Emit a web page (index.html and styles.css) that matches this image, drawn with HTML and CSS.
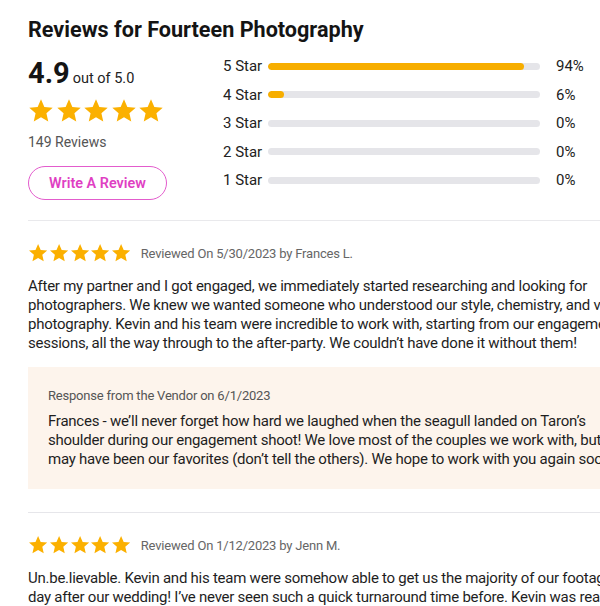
FILE: index.html
```html
<!DOCTYPE html>
<html>
<head>
<meta charset="utf-8">
<link rel="stylesheet" href="styles.css">
</head>
<body>
<svg width="0" height="0" class="defs">
  <defs>
    <symbol id="star" viewBox="0 0 24 24"><path d="M12 1.2l3.1 7.1 7.7.7-5.8 5.1 1.7 7.6L12 17.7l-6.7 4 1.7-7.6-5.8-5.1 7.7-.7z"/></symbol>
  </defs>
</svg>
<main class="page">
  <h1 class="title">Reviews for Fourteen Photography</h1>

  <section class="summary">
    <div class="overall">
      <div class="score"><span class="score-num">4.9</span><span class="score-of">out of 5.0</span></div>
      <div class="stars stars-lg">
        <svg><use href="#star"/></svg><svg><use href="#star"/></svg><svg><use href="#star"/></svg><svg><use href="#star"/></svg><svg><use href="#star"/></svg>
      </div>
      <div class="count">149 Reviews</div>
      <button class="write-btn">Write A Review</button>
    </div>
    <div class="dist">
      <div class="dist-row"><span class="dist-label">5 Star</span><span class="bar"><span class="bar-fill" style="width:94%"></span></span><span class="dist-pct">94%</span></div>
      <div class="dist-row"><span class="dist-label">4 Star</span><span class="bar"><span class="bar-fill" style="width:6%"></span></span><span class="dist-pct">6%</span></div>
      <div class="dist-row"><span class="dist-label">3 Star</span><span class="bar"><span class="bar-fill" style="width:0%"></span></span><span class="dist-pct">0%</span></div>
      <div class="dist-row"><span class="dist-label">2 Star</span><span class="bar"><span class="bar-fill" style="width:0%"></span></span><span class="dist-pct">0%</span></div>
      <div class="dist-row"><span class="dist-label">1 Star</span><span class="bar"><span class="bar-fill" style="width:0%"></span></span><span class="dist-pct">0%</span></div>
    </div>
  </section>

  <article class="review">
    <div class="review-head">
      <div class="stars stars-sm">
        <svg><use href="#star"/></svg><svg><use href="#star"/></svg><svg><use href="#star"/></svg><svg><use href="#star"/></svg><svg><use href="#star"/></svg>
      </div>
      <span class="review-meta">Reviewed On 5/30/2023 by Frances L.</span>
    </div>
    <p class="review-text">After my partner and I got engaged, we immediately started researching and looking for photographers. We knew we wanted someone who understood our style, chemistry, and vision for photography. Kevin and his team were incredible to work with, starting from our engagement sessions, all the way through to the after-party. We couldn’t have done it without them!</p>
    <div class="response">
      <div class="response-meta">Response from the Vendor on 6/1/2023</div>
      <p class="response-text">Frances - we’ll never forget how hard we laughed when the seagull landed on Taron’s shoulder during our engagement shoot! We love most of the couples we work with, but you may have been our favorites (don’t tell the others). We hope to work with you again soon!</p>
    </div>
  </article>

  <article class="review">
    <div class="review-head">
      <div class="stars stars-sm">
        <svg><use href="#star"/></svg><svg><use href="#star"/></svg><svg><use href="#star"/></svg><svg><use href="#star"/></svg><svg><use href="#star"/></svg>
      </div>
      <span class="review-meta">Reviewed On 1/12/2023 by Jenn M.</span>
    </div>
    <p class="review-text">Un.be.lievable. Kevin and his team were somehow able to get us the majority of our footage the day after our wedding! I’ve never seen such a quick turnaround time before. Kevin was really great to work with and we would recommend him to anyone.</p>
  </article>
</main>
</body>
</html>
```
FILE: styles.css
```css
html, body {
  margin: 0;
  padding: 0;
  background: #fff;
  overflow: hidden;
}
body {
  font-family: Roboto, "Liberation Sans", sans-serif;
  color: #1b1b1b;
}
.defs { position: absolute; }
.page {
  width: 625px;
  padding: 17px 0 0 28px;
}
.title {
  margin: 0;
  font-size: 21.6px;
  line-height: 26px;
  font-weight: 700;
  color: #141414;
}
.summary {
  display: flex;
  padding: 13px 0 20px;
  border-bottom: 1px solid #e9e9ec;
}
.overall {
  width: 195px;
  display: flex;
  flex-direction: column;
  align-items: flex-start;
}
.score {
  display: flex;
  align-items: baseline;
  gap: 3px;
  line-height: 34px;
}
.score-num {
  font-size: 29px;
  font-weight: 700;
  color: #141414;
}
.score-of {
  font-size: 14.5px;
  color: #222;
}
.stars {
  display: flex;
  fill: #fbb000;
}
.stars-lg { gap: 1.6px; margin-top: 2px; }
.stars-lg svg { width: 26px; height: 26px; }
.count {
  margin-top: 8px;
  font-size: 14px;
  line-height: 20px;
  color: #555;
}
.write-btn {
  margin-top: 14px;
  width: 139px;
  height: 34px;
  border: 1.5px solid #e35ccd;
  border-radius: 17px;
  background: #fff;
  color: #df3fc3;
  font-family: Roboto, sans-serif;
  font-size: 14.4px;
  font-weight: 600;
  padding: 0;
}
.dist {
  display: flex;
  flex-direction: column;
  gap: 8.5px;
}
.dist-row {
  display: flex;
  align-items: center;
  height: 20px;
  font-size: 15px;
  color: #222;
}
.dist-label { width: 45px; }
.bar {
  width: 272px;
  height: 7px;
  border-radius: 4px;
  background: #e5e5e9;
  overflow: hidden;
  display: block;
}
.bar-fill {
  display: block;
  height: 100%;
  border-radius: 4px;
  background: #f7ae00;
}
.dist-pct { margin-left: 16px; }

.review {
  padding: 22px 0 23px;
  border-bottom: 1px solid #e6e6ea;
}
.review-head {
  display: flex;
  align-items: center;
  gap: 9.5px;
  height: 21px;
}
.stars-sm { gap: 0.6px; }
.stars-sm svg { width: 20.2px; height: 20.2px; }
.review-meta {
  font-size: 13px;
  letter-spacing: -0.2px;
  color: #666;
}
.review-text {
  margin: 13px 0 0;
  font-size: 15px;
  letter-spacing: -0.25px;
  line-height: 19px;
  color: #1e1e1e;
}
.response {
  margin-top: 13.5px;
  background: #fdf4ec;
  padding: 20px 20px 19.5px;
}
.response-meta {
  font-size: 13px;
  letter-spacing: -0.2px;
  line-height: 18px;
  color: #555;
}
.response-text {
  margin: 7.5px 0 0;
  font-size: 15px;
  letter-spacing: -0.25px;
  line-height: 19px;
  color: #1e1e1e;
}
```
